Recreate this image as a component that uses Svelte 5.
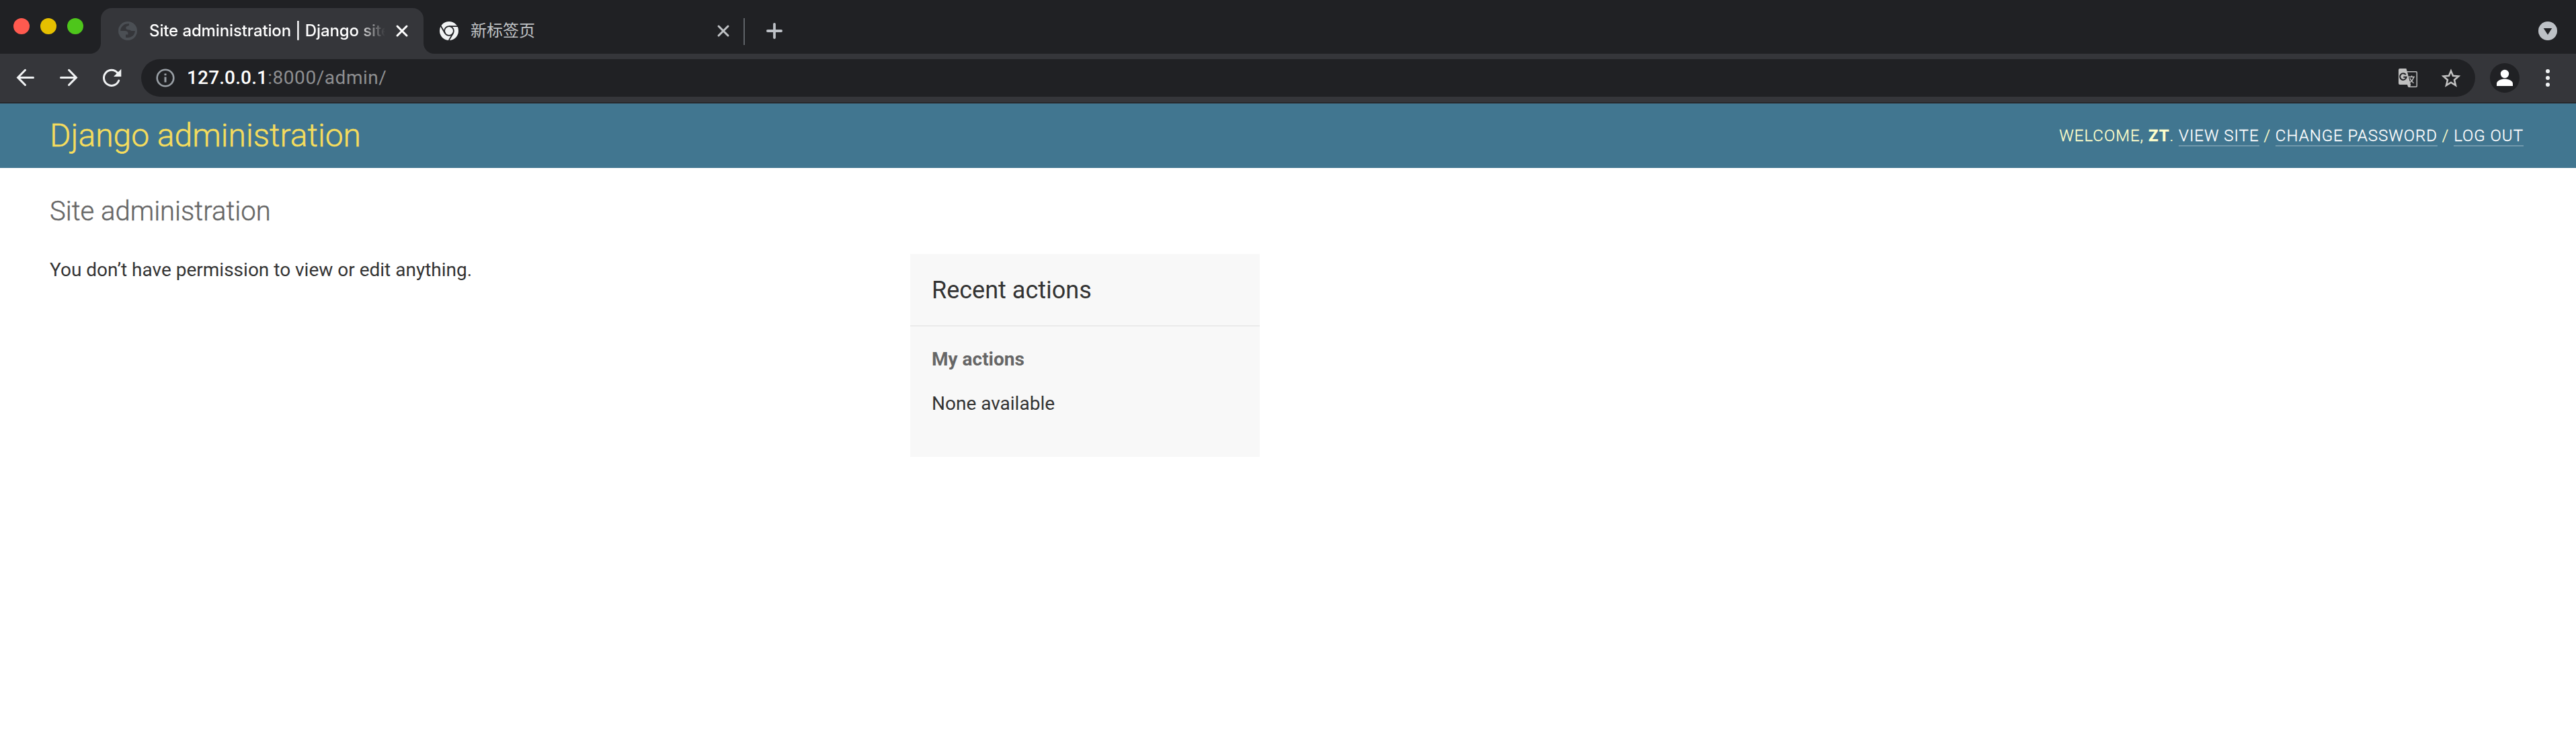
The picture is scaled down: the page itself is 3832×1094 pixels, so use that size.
<script>
  const lights = ['red', 'amber', 'green'];
</script>

<div class="window">
  <div class="tabstrip">
    <div class="lights">
      {#each lights as c}<span class="light {c}"></span>{/each}
    </div>
    <div class="tab active">
      <svg class="fav" viewBox="0 0 28 28">
        <circle cx="14" cy="14" r="14" fill="#4b4f54" />
        <path fill="#35363a" d="M16 3.200C9 2.500 3.200 7.500 3.200 14H10c3 0 4.500 1.500 4.500 3.500v2H11v4.200c7.500 1.800 13.800-3.200 13.800-9.700h-5c-1.500 0-2-1.500-3.500-1.500-3.500 0-5-1-5-3C11.300 7 13.500 7 16 6z" />
      </svg>
      <span class="title">Site administration | Django site</span>
      <svg class="close" viewBox="0 0 18 18"><path d="M2 2 16 16M16 2 2 16" /></svg>
    </div>
    <div class="tab second">
      <svg class="fav" viewBox="0 0 28 28">
        <circle cx="14" cy="14" r="14" fill="#f1f3f4" />
        <g fill="none" stroke="#202124" stroke-width="1.800">
          <circle cx="14" cy="14" r="6.900" />
          <path d="M14 7.100H27M8 17.500 1.500 6.300M20 17.500 13.800 28" />
        </g>
      </svg>
      <span class="title">新标签页</span>
      <svg class="close" viewBox="0 0 18 18"><path d="M2 2 16 16M16 2 2 16" /></svg>
    </div>
    <span class="divider"></span>
    <svg class="plus" viewBox="0 0 24 24"><path d="M12 1.900V22.100M1.900 12H22.100" /></svg>
    <svg class="search" viewBox="0 0 28 28">
      <circle cx="14" cy="14" r="14" fill="#bdc1c6" />
      <path d="M7.700 10H20.300L14 19.700z" fill="#202124" />
    </svg>
  </div>

  <div class="toolbar">
    <div class="nav">
      <svg viewBox="0 0 28 28"><path d="M25.500 13.400H3M13.500 2.300 2.600 13.400 13.500 24.500" /></svg>
      <svg viewBox="0 0 28 28"><path d="M2.500 13.400H25M14.500 2.300 25.400 13.400 14.500 24.500" /></svg>
      <svg viewBox="0 0 28 28">
        <path d="M22.800 6.500A11.500 11.500 0 1 0 24.700 18" />
        <path class="solid" d="M28.300 .7V12H17z" />
      </svg>
    </div>
    <div class="omnibox">
      <svg class="info" viewBox="0 0 28 28">
        <circle cx="14" cy="14" r="12.300" fill="none" stroke="#9aa0a6" stroke-width="2.600" />
        <path d="M12.500 7.400h3v2.800h-3zM12.500 12.400h3v8.200h-3z" fill="#9aa0a6" />
      </svg>
      <span class="url"><b>127.0.0.1</b>:8000/admin/</span>
      <svg class="act" viewBox="0 0 28 28">
        <path d="M2 0H11.500L18.500 24H2a2 2 0 0 1-2-2V2A2 2 0 0 1 2 0z" fill="#c0c0c0" />
        <path d="M13 24h5.500l-1.500 3H14z" fill="#c0c0c0" />
        <path d="M14.300 9.500H28V27H19z" fill="#202124" />
        <path d="M12.500 4.700H26A1.300 1.300 0 0 1 27.300 6V26A1.300 1.300 0 0 1 26 27.300H14.500" fill="none" stroke="#c0c0c0" stroke-width="1.500" />
        <path d="M10.800 9.200A4.800 4.800 0 1 0 11.700 12.700H7.300" fill="none" stroke="#202124" stroke-width="2" />
        <path d="M15 12.500h9M19.500 10.500v2M22.500 12.500c-.6 3.500-3 6.500-6 8.500M17 14.500c1 2.800 3.200 5.200 5.500 7.300" fill="none" stroke="#c0c0c0" stroke-width="1.500" />
      </svg>
      <svg class="act" viewBox="0 0 28 28">
        <path d="M14 3.500 17 10.800 25.300 11.500 19 17 21 25 14 20.700 7 25 9 17 2.700 11.500 11 10.800z" fill="none" stroke="#c3c3c3" stroke-width="2.500" />
      </svg>
    </div>
    <svg class="avatar" viewBox="0 0 44 44">
      <circle cx="22" cy="22" r="22" fill="#202124" />
      <circle cx="22" cy="16" r="6.200" fill="#fff" />
      <path d="M10 34V30.500C10 26 17 23.600 22 23.600S34 26 34 30.500V34z" fill="#fff" />
    </svg>
    <svg class="dots" viewBox="0 0 6 26">
      <circle cx="3" cy="3" r="3" /><circle cx="3" cy="13" r="3" /><circle cx="3" cy="23" r="3" />
    </svg>
  </div>

  <header>
    <h1>Django administration</h1>
    <div class="user">
      Welcome, <strong>ZT</strong>. <a href="#site">View site</a> / <a href="#password">Change password</a> / <a href="#logout">Log out</a>
    </div>
  </header>

  <main>
    <h2>Site administration</h2>
    <div class="columns">
      <p class="msg">You don’t have permission to view or edit anything.</p>
      <aside>
        <h3>Recent actions</h3>
        <h4>My actions</h4>
        <p>None available</p>
      </aside>
    </div>
  </main>
</div>

<style>
  :global(body) { background: #fff; }
  .window { width: 3832px; height: 1094px; overflow: hidden; font-family: Roboto, "Noto Sans CJK SC", sans-serif; color: #333; }
  svg { display: block; flex: none; overflow: visible; }
  .tabstrip { height: 80px; box-sizing: border-box; background: #202124; display: flex; align-items: flex-end; padding-right: 28px; }
  .lights { display: flex; gap: 16px; padding-left: 20px; width: 130px; height: 53px; align-items: flex-start; }
  .light { width: 24px; height: 24px; border-radius: 50%; }
  .red { background: #ff5a4f; }
  .amber { background: #e6c000; }
  .green { background: #4ec61b; }
  .tab { position: relative; height: 68px; width: 480px; box-sizing: border-box; display: flex; align-items: center; padding: 0 23px 0 26px; color: #c0c3c6; font: 24px/40px Inter, "Noto Sans CJK SC", sans-serif; }
  .tab.second { width: 476px; padding: 0 21px 0 24px; }
  .tab.active { background: #35363a; color: #fff; border-radius: 16px 16px 0 0; }
  .tab.active::before, .tab.active::after { content: ""; position: absolute; bottom: 0; width: 16px; height: 16px; }
  .tab.active::before { left: -16px; background: radial-gradient(circle at 0 0, transparent 15.500px, #35363a 16.500px); }
  .tab.active::after { right: -16px; background: radial-gradient(circle at 100% 0, transparent 15.500px, #35363a 16.500px); z-index: 1; }
  .fav { width: 28px; height: 28px; }
  .title { flex: 1; min-width: 0; margin: 0 16px 0 18px; white-space: nowrap; overflow: hidden; }
  .active .title { font-weight: 500; letter-spacing: -.12px; -webkit-mask-image: linear-gradient(to right, #000 calc(100% - 42px), transparent); mask-image: linear-gradient(to right, #000 calc(100% - 42px), transparent); }
  .close { width: 18px; height: 18px; }
  .close path, .plus path { fill: none; stroke: currentColor; stroke-width: 3; stroke-linecap: round; }
  .divider { width: 2px; height: 40px; margin-bottom: 13px; background: #5f6368; }
  .plus { width: 24px; height: 24px; margin: 0 0 22px 32px; color: #bdc1c6; }
  .plus path { stroke-width: 3.800; }
  .search { width: 28px; height: 28px; margin: 0 0 20px auto; }
  .toolbar { height: 74px; box-sizing: border-box; border-bottom: 2px solid #28292c; background: #35363a; display: flex; align-items: center; padding: 0 39px 0 24px; }
  .nav { display: flex; gap: 36px; width: 186px; }
  .nav svg { width: 28px; height: 28px; }
  .nav path { fill: none; stroke: #f1f3f4; stroke-width: 3; stroke-linecap: round; }
  .nav path.solid { fill: #f1f3f4; stroke: none; }
  .omnibox { flex: 1; height: 56px; box-sizing: border-box; border-radius: 28px; background: #202124; display: flex; align-items: center; padding: 0 22px; gap: 36px; }
  .info { width: 28px; height: 28px; }
  .url { flex: 1; margin-left: -18px; font: 28px/40px Roboto, sans-serif; color: #8e8f91; letter-spacing: .55px; }
  .url b { font-weight: 500; letter-spacing: .15px; color: #fff; }
  .act { width: 28px; height: 28px; }
  .avatar { width: 44px; height: 44px; margin-left: 22px; }
  .dots { width: 6px; height: 26px; margin-left: 39px; fill: #f1f3f4; }
  header { height: 96px; background: #417690; display: flex; align-items: center; justify-content: space-between; padding: 0 78px 0 74px; color: #ffc; }
  h1 { margin: 0; font: 300 48px/56px Roboto, sans-serif; color: #f5dd5d; -webkit-text-stroke: .5px currentColor; }
  .user { font-size: 24px; line-height: 28px; font-weight: 300; letter-spacing: 1px; text-transform: uppercase; white-space: nowrap; -webkit-text-stroke: .3px currentColor; }
  .user strong { font-weight: 700; }
  .user a { color: #fff; text-decoration: none; border-bottom: 2px solid rgba(255, 255, 255, .25); }
  main { padding: 41px 74px; }
  h2 { margin: 0 0 35px; font: 300 40px/48px Roboto, sans-serif; color: #666; -webkit-text-stroke: .4px currentColor; }
  .columns { display: grid; grid-template-columns: 1280px 520px; align-items: start; }
  p { margin: 0; font-size: 28px; line-height: 36px; }
  .msg { margin-top: 10px; }
  aside { height: 302px; background: #f8f8f8; margin-top: 4px; }
  h3 { margin: 0; height: 108px; padding: 32px 32px 0; box-sizing: border-box; border-bottom: 2px solid #eaeaea; font: 400 36px/44px Roboto, sans-serif; }
  h4 { margin: 31px 32px 30px; font: 700 28px/36px Roboto, sans-serif; color: #666; }
  aside p { padding: 0 32px; }
</style>
